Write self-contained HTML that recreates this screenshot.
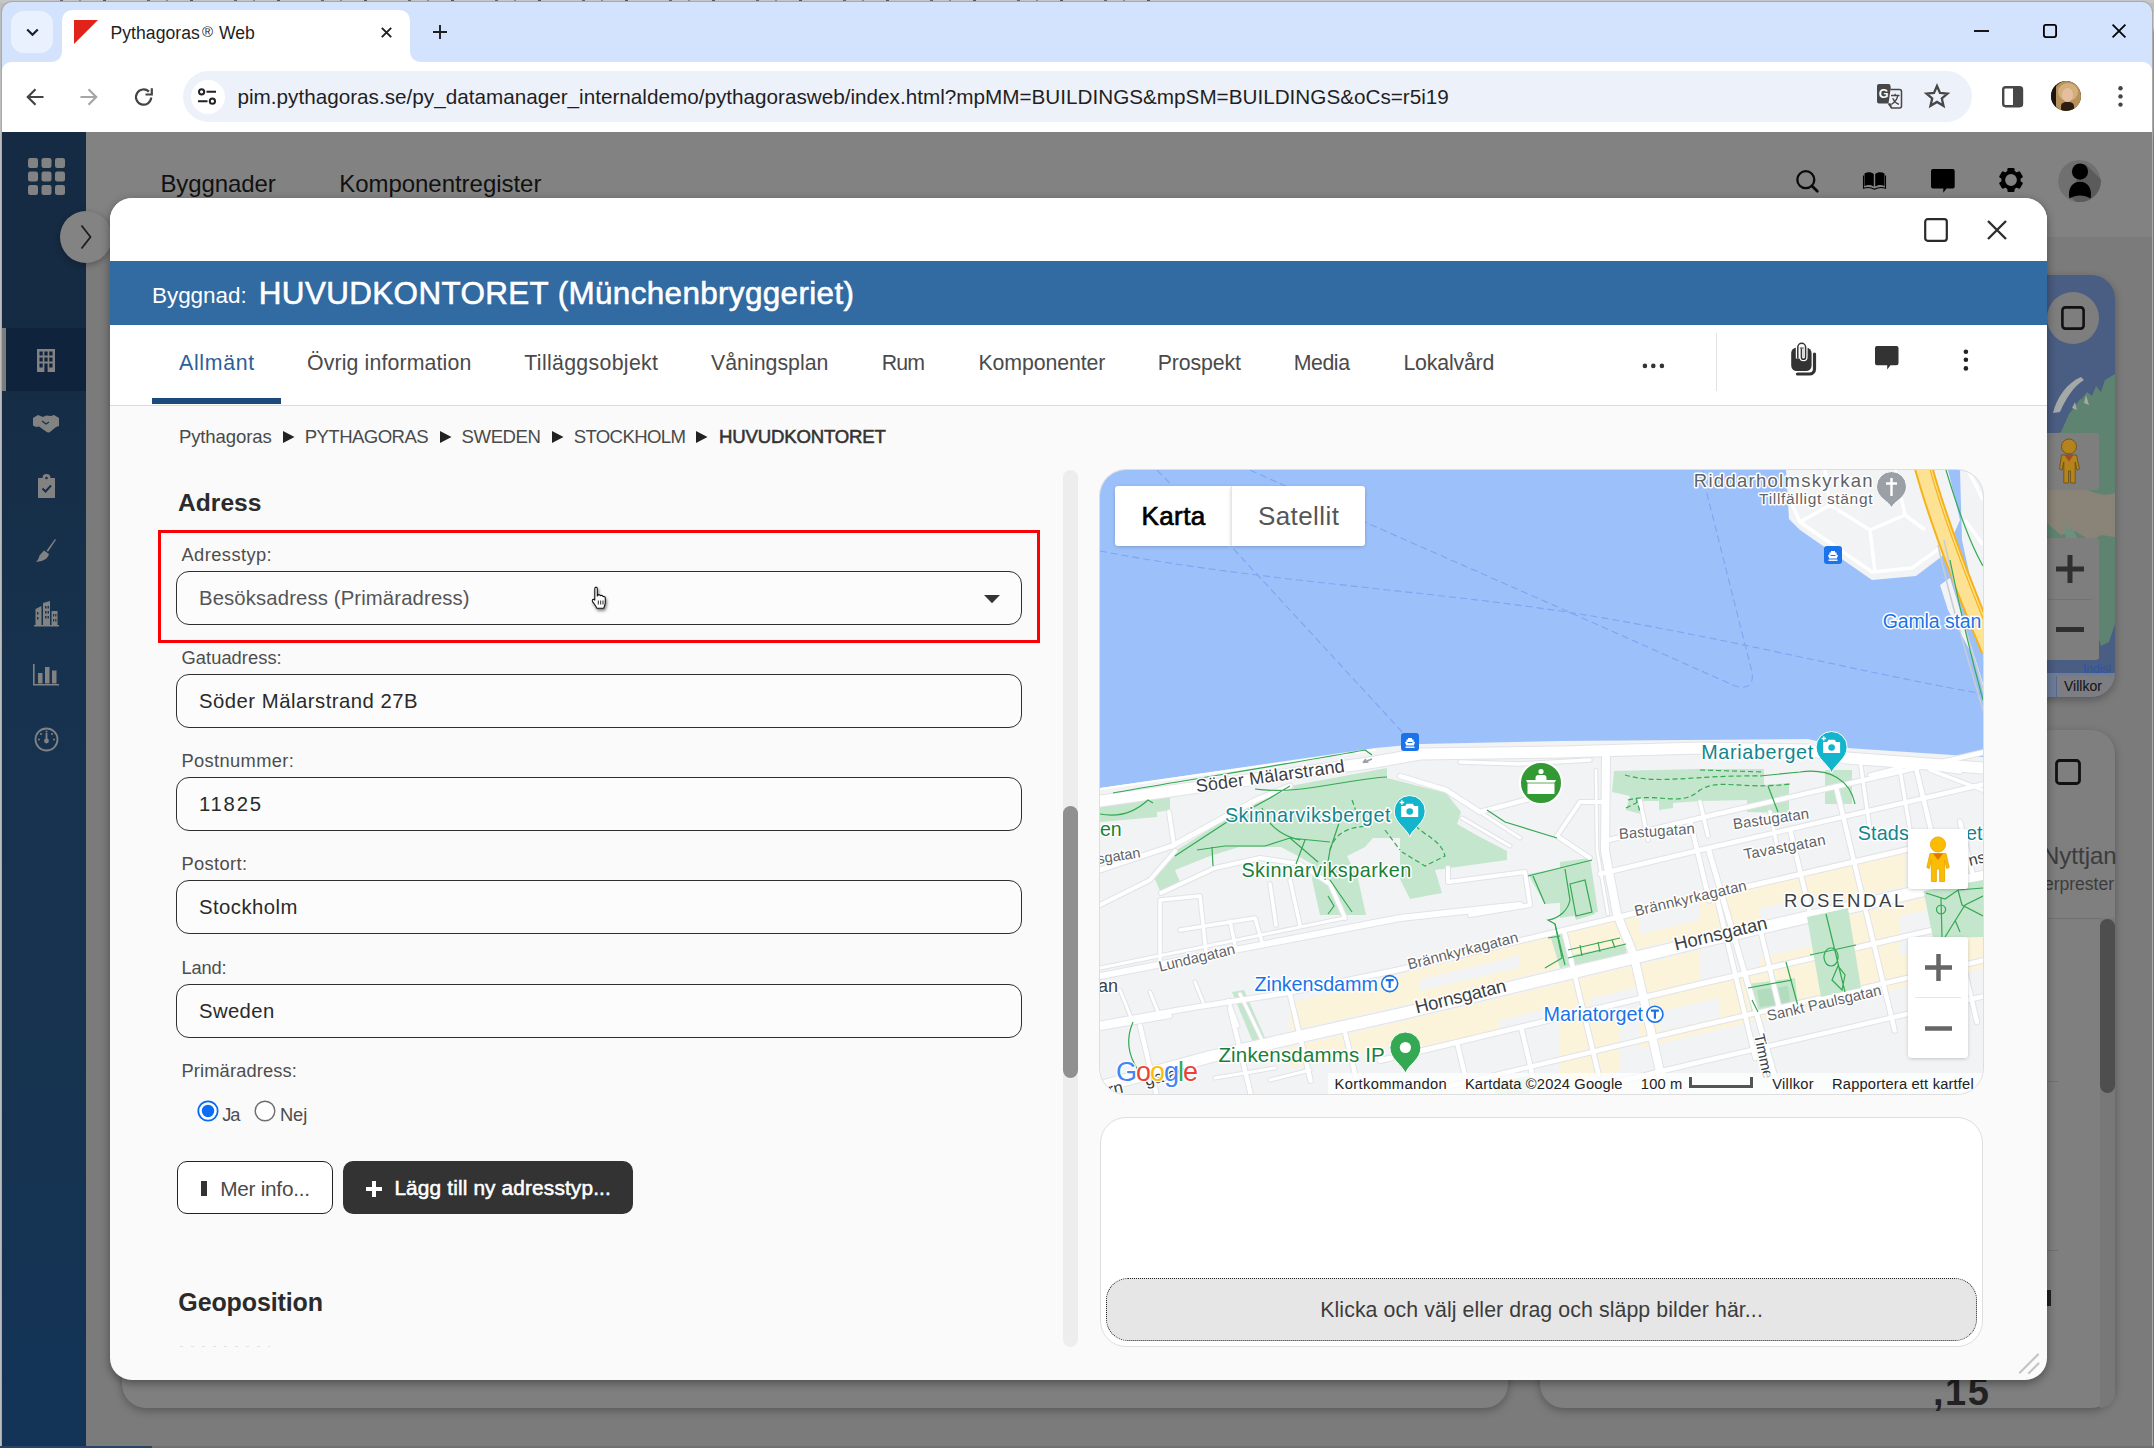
<!DOCTYPE html>
<html lang="sv">
<head>
<meta charset="utf-8">
<title>Pythagoras® Web</title>
<style>
*{box-sizing:border-box;margin:0;padding:0}
html,body{width:2154px;height:1448px;overflow:hidden;background:#bdbdbd}
body{position:relative;font-family:"Liberation Sans",sans-serif;color:#222}
svg{display:block}
svg text{font-family:"Liberation Sans",sans-serif}
#modal{position:absolute;left:110px;top:198px;width:1937px;height:1182px;background:#fafafa;border-radius:22px;overflow:hidden}
#modalsh{position:absolute;left:110px;top:198px;width:1937px;height:1182px;border-radius:22px;box-shadow:0 3px 10px rgba(0,0,0,.4)}
#map{position:absolute;left:990px;top:272px;width:883px;height:624px;border-radius:26px;overflow:hidden;background:#f1f3f4;box-shadow:0 0 0 1px #dedede}
#map>svg{position:absolute;left:0;top:0}
#mapc{position:absolute;left:0;top:0;width:883px;height:624px}
</style>
</head>
<body>
<!-- browser chrome -->
<div style="position:absolute;left:0.0px;top:0.0px;width:2154.0px;height:3.0px;background:#c6c6c6"></div>
<div style="position:absolute;left:60.0px;top:0.0px;width:1100.0px;height:2.0px;background:repeating-linear-gradient(90deg,#666 0 3px,#c6c6c6 3px 19px,#888 19px 21px,#c6c6c6 21px 43px,#555 43px 46px,#c6c6c6 46px 87px)"></div>
<div style="position:absolute;left:1.0px;top:1.0px;width:2152.0px;height:1447.0px;background:#a9a9a9;border-radius:11px 11px 0 0"></div>
<div style="position:absolute;left:2.0px;top:2.0px;width:2150.0px;height:1446.0px;background:#d3e3fd;border-radius:10px 10px 0 0"></div>
<div style="position:absolute;left:2.0px;top:62.0px;width:2150.0px;height:70.0px;background:#fff;border-radius:9px 9px 0 0"></div>
<div style="position:absolute;left:11.0px;top:11.0px;width:42.0px;height:42.0px;background:#e9f1fe;border-radius:13px"></div>
<svg style="position:absolute;left:25.5px;top:27.5px;overflow:visible;" width="13" height="9" viewBox="0 0 13 9"><path d="M1.2 1.5L6.5 6.800 11.800 1.5" fill="none" stroke="#1f1f1f" stroke-width="2.2"/></svg>
<svg style="position:absolute;left:50.0px;top:10.0px;overflow:visible;" width="372" height="52" viewBox="0 0 372 52"><path d="M0 52C8 52 12 48 12 40V12C12 4 16 0 24 0H348C356 0 360 4 360 12V40C360 48 364 52 372 52z" fill="#fff"/></svg>
<svg style="position:absolute;left:74.0px;top:20.0px;overflow:visible;" width="24" height="24" viewBox="0 0 24 24"><path d="M0 0H24L0 24z" fill="#e2231a"/></svg>
<div style="position:absolute;line-height:1;white-space:nowrap;left:110.5px;top:24.8px;font-size:17.6px;color:#1f1f1f;letter-spacing:0.037px;">Pythagoras<span style="font-size:15px;position:relative;top:-1.500px;margin:0 6px 0 2px">®</span>Web</div>
<svg style="position:absolute;left:380.5px;top:26.5px;overflow:visible;" width="11" height="11" viewBox="0 0 11 11"><path d="M.8.8L10.200 10.200M10.200.8L.8 10.200" stroke="#1f1f1f" stroke-width="1.900" fill="none"/></svg>
<svg style="position:absolute;left:433.0px;top:25.0px;overflow:visible;" width="14" height="14" viewBox="0 0 14 14"><path d="M7 0v14M0 7h14" stroke="#1f1f1f" stroke-width="1.900" fill="none"/></svg>
<svg style="position:absolute;left:1974.0px;top:29.8px;overflow:visible;" width="15" height="2" viewBox="0 0 15 2"><path d="M0 1h15" stroke="#000" stroke-width="1.800"/></svg>
<svg style="position:absolute;left:2042.5px;top:23.5px;overflow:visible;" width="14" height="14" viewBox="0 0 14 14"><rect x=".9" y=".9" width="12.200" height="12.200" rx="2" fill="none" stroke="#000" stroke-width="1.800"/></svg>
<svg style="position:absolute;left:2111.5px;top:24.0px;overflow:visible;" width="14" height="14" viewBox="0 0 14 14"><path d="M.6.6L13.400 13.400M13.400.6L.6 13.400" stroke="#000" stroke-width="1.800" fill="none"/></svg>
<svg style="position:absolute;left:26.0px;top:87.5px;overflow:visible;" width="18" height="18" viewBox="0 0 18 18"><path d="M17.500 9H2M9.500 1.200L1.800 9l7.700 7.800" fill="none" stroke="#444" stroke-width="2.200"/></svg>
<svg style="position:absolute;left:80.0px;top:87.5px;overflow:visible;" width="18" height="18" viewBox="0 0 18 18"><path d="M.5 9H16M8.500 1.200L16.200 9l-7.700 7.800" fill="none" stroke="#a6a6a6" stroke-width="2.200"/></svg>
<svg style="position:absolute;left:133.5px;top:86.5px;overflow:visible;" width="20" height="20" viewBox="0 0 20 20"><path d="M17.200 10.500a7.600 7.600 0 1 1-2.300-5.900" fill="none" stroke="#444" stroke-width="2.200"/><path d="M17.800 1.200v6.300h-6.300" fill="none" stroke="#444" stroke-width="2.200"/></svg>
<div style="position:absolute;left:183.0px;top:71.0px;width:1789.0px;height:50.5px;background:#edf1fa;border-radius:26px"></div>
<div style="position:absolute;left:190.5px;top:79.5px;width:34.0px;height:34.0px;background:#fff;border-radius:50%"></div>
<svg style="position:absolute;left:198.0px;top:88.0px;overflow:visible;" width="19" height="17" viewBox="0 0 19 17"><path d="M8.500 3.800H18M0 13.200h9.500" stroke="#222" stroke-width="2"/><circle cx="3.600" cy="3.800" r="2.600" fill="none" stroke="#222" stroke-width="2"/><circle cx="14.400" cy="13.200" r="2.600" fill="none" stroke="#222" stroke-width="2"/></svg>
<div class="url" style="position:absolute;line-height:1;white-space:nowrap;left:237.5px;top:86.7px;font-size:20.7px;color:#1f1f1f;">pim.pythagoras.se/py_datamanager_internaldemo/pythagorasweb/index.html?mpMM=BUILDINGS&amp;mpSM=BUILDINGS&amp;oCs=r5i19</div>
<svg style="position:absolute;left:1876.5px;top:84.0px;overflow:visible;" width="26" height="26" viewBox="0 0 26 26"><path d="M2 0h9.500a2 2 0 0 1 2 2l1.500 17.500H2a2 2 0 0 1-2-2V2a2 2 0 0 1 2-2z" fill="#474747"/><path d="M13.500 5.500h9a2 2 0 0 1 2 2v14.500a2 2 0 0 1-2 2h-8l-3-4.500" fill="#edf1fa" stroke="#474747" stroke-width="1.500" stroke-linejoin="round"/><path d="M11.500 19.500l3 4.500v-4.500z" fill="#474747"/><text x="6.500" y="14.300" font-family="Liberation Sans,sans-serif" font-size="12.500" font-weight="bold" fill="#fff" text-anchor="middle">G</text><path d="M14 11.500h8.500M18.200 9.800v1.700M20.900 11.500c-1 4-3.300 7-6.200 8.800M15.700 14.200c1.200 2.700 3.300 4.900 6.300 6.200" stroke="#474747" stroke-width="1.300" fill="none"/></svg>
<svg style="position:absolute;left:1925.0px;top:83.5px;overflow:visible;" width="24" height="24" viewBox="0 0 24 24"><path d="M12 2l3 6.900 7.500.7-5.700 4.900 1.700 7.300L12 17.900l-6.500 3.900 1.700-7.300L1.500 9.600 9 8.900z" fill="none" stroke="#474747" stroke-width="2.300" stroke-linejoin="miter"/></svg>
<svg style="position:absolute;left:2002.0px;top:85.7px;overflow:visible;" width="21.2" height="21.4" viewBox="0 0 21.2 21.4"><rect x="1.200" y="1.200" width="18.800" height="19" rx="2.400" fill="none" stroke="#474747" stroke-width="2.400"/><path d="M11 1h8a2 2 0 0 1 2 2v15.400a2 2 0 0 1-2 2h-8z" fill="#474747"/></svg>
<div style="position:absolute;left:2050.8px;top:80.8px;width:30.0px;height:30.0px;border-radius:50%;overflow:hidden;background:#3a2c22"><div style="position:absolute;left:2px;top:0;width:28px;height:30px;border-radius:50% 50% 40% 45%;background:#b8905a"></div><div style="position:absolute;left:7px;top:2px;width:20px;height:18px;border-radius:50%;background:#d2b07c"></div><div style="position:absolute;left:11.500px;top:7px;width:11px;height:14px;border-radius:50%;background:#e6bd9e"></div><div style="position:absolute;left:10px;top:21px;width:13px;height:10px;border-radius:40% 40% 0 0;background:#2b1d12"></div><div style="position:absolute;left:0;top:4px;width:5px;height:22px;background:#1c1512"></div></div>
<svg style="position:absolute;left:2116.5px;top:85.5px;overflow:visible;" width="7" height="21" viewBox="0 0 7 21"><circle cx="3.500" cy="2.200" r="2.200" fill="#444"/><circle cx="3.500" cy="10.400" r="2.200" fill="#444"/><circle cx="3.500" cy="18.600" r="2.200" fill="#444"/></svg>
<!-- page (dimmed) -->
<div style="position:absolute;left:2.0px;top:132.0px;width:2150.0px;height:1316.0px;background:#7b7b7b"></div>
<div style="position:absolute;left:2.0px;top:132.0px;width:2150.0px;height:105.0px;background:#828282"></div>
<div style="position:absolute;left:122.0px;top:1200.0px;width:1386.0px;height:208.0px;background:#7f7f7f;border-radius:24px;box-shadow:0 3px 8px rgba(0,0,0,.28);"></div>
<div style="position:absolute;left:1540.0px;top:730.0px;width:575.0px;height:678.0px;background:#7f7f7f;border-radius:24px;box-shadow:0 3px 8px rgba(0,0,0,.28);"></div>
<div style="position:absolute;line-height:1;white-space:nowrap;left:1933.0px;top:1372.6px;font-size:38px;color:#222;font-weight:bold;letter-spacing:1.500px;">,15</div>
<div style="position:absolute;left:1960.0px;top:275.0px;width:155.0px;height:422.0px;border-radius:24px;overflow:hidden;background:#4a5d82;box-shadow:0 3px 8px rgba(0,0,0,.28);"><svg width="155" height="422" viewBox="0 0 155 422" style="position:absolute;left:0;top:0"><path d="M121 125l6-8 5 4 4-10 5 6 4-12 10-6v250l-6 18-8 4-6-20-12-36-6-4-10-30 2-14-28-6v-96l20-8 8-18 12-16z" fill="#5e8471"/><path d="M87 212c12-4 26-2 38 2 10 4 20 8 30 4v44l-14-2-10 6-16-10-14 4-14-12z" fill="#8a8478"/><path d="M104 250l10 6 6 14 12 4 4 10-10-2-8-10-12-8z" fill="#6f8f7e"/><path d="M93 138c4-16 14-30 28-36l3 3c-10 6-18 18-24 32z" fill="#a4a8a6"/><path d="M112 133l3-6 2 8zM124 128l2-8 3 10z" fill="#a4a8a6"/><rect x="87" y="398" width="68" height="24" fill="#6d7d99"/><rect x="96" y="401" width="59" height="21" fill="#7c7e83"/><rect x="96" y="401" width="1" height="21" fill="#56688c"/><text x="104" y="416" font-size="14" fill="#111">Villkor</text><text x="123" y="398" font-size="12" fill="#2d55a5">Indisl</text></svg></div>
<div style="position:absolute;left:2047.0px;top:292.0px;width:52.0px;height:52.0px;border-radius:50%;background:#7e7e7e"></div>
<svg style="position:absolute;left:2061.0px;top:306.0px;overflow:visible;" width="24" height="24" viewBox="0 0 24 24"><rect x="1.400" y="1.400" width="21.200" height="21.200" rx="3" fill="none" stroke="#111" stroke-width="2.600"/></svg>
<div style="position:absolute;left:2040.0px;top:433.0px;width:59.0px;height:57.0px;background:#7e7e7e;border-radius:3px"></div>
<svg style="position:absolute;left:2057.0px;top:438.0px;overflow:visible;" width="24" height="46" viewBox="0 0 24 46"><circle cx="12" cy="8.500" r="7.500" fill="#b4831c" stroke="#6b4d10" stroke-width=".8"/><path d="M4.500 17h15l3 14-2.500 1-1.800-8V45h-4.700V33h-2V45H6.800V24L5 32l-2.500-1z" fill="#b4831c" stroke="#6b4d10" stroke-width=".8"/><path d="M7.500 17h9L12 23.500z" fill="#a8452a"/></svg>
<div style="position:absolute;left:2040.0px;top:538.0px;width:59.0px;height:122.0px;background:#7e7e7e;border-radius:3px"></div>
<div style="position:absolute;left:2047.0px;top:598.5px;width:45.0px;height:1.0px;background:#737373"></div>
<svg style="position:absolute;left:2056.0px;top:555.0px;overflow:visible;" width="28" height="28" viewBox="0 0 28 28"><path d="M14 0v28M0 14h28" stroke="#2f2f2f" stroke-width="5"/></svg>
<svg style="position:absolute;left:2056.0px;top:626.5px;overflow:visible;" width="28" height="5" viewBox="0 0 28 5"><path d="M0 2.500h28" stroke="#2f2f2f" stroke-width="5"/></svg>
<svg style="position:absolute;left:2055.0px;top:759.0px;overflow:visible;" width="26" height="26" viewBox="0 0 26 26"><rect x="1.500" y="1.500" width="23" height="23" rx="3" fill="none" stroke="#111" stroke-width="2.800"/></svg>
<div style="position:absolute;line-height:1;white-space:nowrap;left:2042.0px;top:843.7px;font-size:24px;color:#3c3c3c;">Nyttjan</div>
<div style="position:absolute;line-height:1;white-space:nowrap;left:2044.0px;top:876.2px;font-size:17.5px;color:#3c3c3c;">erprester</div>
<div style="position:absolute;left:2047.0px;top:918.0px;width:53.0px;height:1.0px;background:#707070"></div>
<div style="position:absolute;left:2047.0px;top:1081.0px;width:11.0px;height:1.0px;background:#707070"></div>
<div style="position:absolute;left:2047.0px;top:1250.0px;width:11.0px;height:1.0px;background:#707070"></div>
<div style="position:absolute;left:2100.0px;top:918.0px;width:15.0px;height:490.0px;background:#787878;border-radius:0 0 22px 0"></div>
<div style="position:absolute;left:2100.0px;top:919.0px;width:15.0px;height:174.0px;background:#4e4e4e;border-radius:8px"></div>
<div style="position:absolute;left:2047.0px;top:1290.0px;width:4.0px;height:16.0px;background:#222"></div>
<div style="position:absolute;line-height:1;white-space:nowrap;left:160.4px;top:171.9px;font-size:24px;color:#111;letter-spacing:-0.099px;">Byggnader</div>
<div style="position:absolute;line-height:1;white-space:nowrap;left:339.2px;top:171.9px;font-size:24px;color:#111;letter-spacing:-0.036px;">Komponentregister</div>
<svg style="position:absolute;left:1794.5px;top:168.5px;overflow:visible;" width="24" height="24" viewBox="0 0 24 24"><circle cx="10.800" cy="10.700" r="8.500" fill="none" stroke="#0a0a0a" stroke-width="2.300"/><path d="M17 17L22.300 22.300" stroke="#0a0a0a" stroke-width="2.800" stroke-linecap="round"/></svg>
<svg style="position:absolute;left:1863.0px;top:172.0px;overflow:visible;" width="23" height="18" viewBox="0 0 23 18"><path d="M1.500 1.500C4.500-.3 8.500-.1 10.800 2v12.500C8.500 12.600 4.500 12.400 1.500 14z" fill="#000"/><path d="M21.500 1.500C18.500-.3 14.500-.1 12.200 2v12.500c2.300-1.900 6.300-2.100 9.300-.5z" fill="#000"/><path d="M.5 3.500v12.800c3.500-1.200 7.500-1 11 .9 3.500-1.900 7.500-2.100 11-.9V3.500" fill="none" stroke="#000" stroke-width="1.100"/></svg>
<svg style="position:absolute;left:1931.2px;top:169.3px;overflow:visible;" width="24" height="24" viewBox="0 0 24 24"><path d="M2 0h19.700a2 2 0 0 1 2 2v15.400a2 2 0 0 1-2 2H15.500l-3.200 4.300V19.400H2a2 2 0 0 1-2-2V2a2 2 0 0 1 2-2z" fill="#000"/></svg>
<svg style="position:absolute;left:1999.3px;top:168.3px;overflow:visible;" width="24" height="24" viewBox="0 0 24 24"><g transform="translate(12 12)"><circle r="7.800" fill="none" stroke="#000" stroke-width="3.800"/><rect x="-3.600" y="-12" width="7.200" height="5" rx="1.200" fill="#000" transform="rotate(0)"/><rect x="-3.600" y="-12" width="7.200" height="5" rx="1.200" fill="#000" transform="rotate(60)"/><rect x="-3.600" y="-12" width="7.200" height="5" rx="1.200" fill="#000" transform="rotate(120)"/><rect x="-3.600" y="-12" width="7.200" height="5" rx="1.200" fill="#000" transform="rotate(180)"/><rect x="-3.600" y="-12" width="7.200" height="5" rx="1.200" fill="#000" transform="rotate(240)"/><rect x="-3.600" y="-12" width="7.200" height="5" rx="1.200" fill="#000" transform="rotate(300)"/></g></svg>
<svg style="position:absolute;left:2058.3px;top:159.8px;overflow:visible;overflow:hidden;border-radius:50%;" width="42.6" height="42.6" viewBox="0 0 42.6 42.6"><circle cx="21.300" cy="21.300" r="21.300" fill="#707070"/><path d="M27 3.400L60 36.400L44 68L11 35z" fill="#5b5b5b"/></svg>
<svg style="position:absolute;left:2066.6px;top:162.5px;overflow:visible;" width="26" height="36" viewBox="0 0 26 36"><circle cx="13" cy="8.600" r="8.100" fill="#000"/><path d="M2.400 35.500C.5 26 5 18.800 13 18.800S25.500 26 23.600 35.500C17 31.500 9 31.500 2.400 35.500z" fill="#000"/></svg>
<div style="position:absolute;left:2.0px;top:132.0px;width:84.0px;height:1316.0px;background:linear-gradient(#152b43 0,#152b43 14%,#17324e 40%,#16334f 70%,#133358 100%)"></div>
<div style="position:absolute;left:2.0px;top:328.0px;width:84.0px;height:63.0px;background:#10233d"></div>
<div style="position:absolute;left:2.0px;top:328.0px;width:4.0px;height:63.0px;background:#7d7d7d"></div>
<svg style="position:absolute;left:28.0px;top:158.0px;overflow:visible;" width="37" height="37" viewBox="0 0 37 37"><rect x="0.0" y="0.0" width="10" height="10" rx="2.200" fill="#828282"/><rect x="13.5" y="0.0" width="10" height="10" rx="2.200" fill="#828282"/><rect x="27.0" y="0.0" width="10" height="10" rx="2.200" fill="#828282"/><rect x="0.0" y="13.5" width="10" height="10" rx="2.200" fill="#828282"/><rect x="13.5" y="13.5" width="10" height="10" rx="2.200" fill="#828282"/><rect x="27.0" y="13.5" width="10" height="10" rx="2.200" fill="#828282"/><rect x="0.0" y="27.0" width="10" height="10" rx="2.200" fill="#828282"/><rect x="13.5" y="27.0" width="10" height="10" rx="2.200" fill="#828282"/><rect x="27.0" y="27.0" width="10" height="10" rx="2.200" fill="#828282"/></svg>
<div style="position:absolute;left:60.0px;top:211.0px;width:52.0px;height:52.0px;border-radius:50%;background:#838383;box-shadow:0 2px 6px rgba(0,0,0,.3)"></div>
<svg style="position:absolute;left:80.0px;top:224.0px;overflow:visible;" width="12" height="26" viewBox="0 0 12 26"><path d="M1.500 1.500L10.500 13 1.500 24.500" fill="none" stroke="#1d1d1d" stroke-width="1.800"/></svg>
<svg style="position:absolute;left:37.0px;top:349.0px;overflow:visible;" width="18" height="23" viewBox="0 0 18 23"><path d="M0 0h18v23H0z" fill="#828282"/><g fill="#10233d"><rect x="2.500" y="2.500" width="3.200" height="4"/><rect x="7.400" y="2.500" width="3.200" height="4"/><rect x="12.300" y="2.500" width="3.200" height="4"/><rect x="2.500" y="8.500" width="3.200" height="4"/><rect x="7.400" y="8.500" width="3.200" height="4"/><rect x="12.300" y="8.500" width="3.200" height="4"/><rect x="2.500" y="14.500" width="3.200" height="4"/><rect x="12.300" y="14.500" width="3.200" height="4"/><rect x="7.400" y="14.500" width="3.200" height="8.500"/></g></svg>
<svg style="position:absolute;left:33.0px;top:415.0px;overflow:visible;" width="26" height="17" viewBox="0 0 26 17"><path d="M0 3l5-3 5 2 3-1.500L18 1l3-1 5 3v8l-3 1-6 5c-1.500 1-3 .5-4-.5l-7-5-3 .5-3-1.500z" fill="#828282"/><path d="M9 6l4 3 3-2" fill="none" stroke="#17304f" stroke-width="1.300"/></svg>
<svg style="position:absolute;left:37.5px;top:475.0px;overflow:visible;" width="17" height="23" viewBox="0 0 17 23"><path d="M0 3h4.500a4 4 0 0 1 8 0H17v20H0z" fill="#828282"/><path d="M4.500 13.500l3 3 5.500-6" fill="none" stroke="#17304f" stroke-width="2"/><circle cx="8.500" cy="3" r="1.300" fill="#17304f"/></svg>
<svg style="position:absolute;left:36.0px;top:539.0px;overflow:visible;" width="20" height="23" viewBox="0 0 20 23"><path d="M19 0l1 .8-8 12-1.500-1z" fill="#828282"/><path d="M8 11.500l5 3.500c-1 4-4 7-13 8 2-2 3-4 3.500-6.500z" fill="#828282"/></svg>
<svg style="position:absolute;left:34.0px;top:601.0px;overflow:visible;" width="25" height="25" viewBox="0 0 25 25"><path d="M0 24h25v1.500H0zM1.500 8l6-3v19h-6zM9 2l7-2v24H9zM17.500 10h6v14h-6z" fill="#828282"/><g fill="#1a3557"><rect x="3" y="11" width="1.500" height="2.500"/><rect x="3" y="16" width="1.500" height="2.500"/><rect x="11" y="5" width="1.500" height="2.500"/><rect x="13.500" y="5" width="1.500" height="2.500"/><rect x="11" y="10" width="1.500" height="2.500"/><rect x="13.500" y="10" width="1.500" height="2.500"/><rect x="11" y="15" width="1.500" height="2.500"/><rect x="13.500" y="15" width="1.500" height="2.500"/><rect x="19" y="13" width="1.200" height="2.500"/><rect x="21.200" y="13" width="1.200" height="2.500"/><rect x="19" y="18" width="1.200" height="2.500"/><rect x="21.200" y="18" width="1.200" height="2.500"/></g></svg>
<svg style="position:absolute;left:33.0px;top:664.0px;overflow:visible;" width="26" height="22" viewBox="0 0 26 22"><path d="M0 0h1.600v20H26v1.600H0z" fill="#828282"/><rect x="5" y="9" width="4.500" height="10.500" fill="#828282"/><rect x="12" y="3" width="4.500" height="16.500" fill="#828282"/><rect x="19" y="6.500" width="4.500" height="13" fill="#828282"/></svg>
<svg style="position:absolute;left:34.0px;top:727.0px;overflow:visible;" width="25" height="25" viewBox="0 0 25 25"><circle cx="12.500" cy="12.500" r="11" fill="none" stroke="#828282" stroke-width="1.800"/><circle cx="12.500" cy="14" r="2.400" fill="#828282"/><path d="M12.500 14V6" stroke="#828282" stroke-width="1.800"/><g fill="#828282"><circle cx="12.500" cy="4.500" r="1"/><circle cx="5" cy="12.500" r="1"/><circle cx="20" cy="12.500" r="1"/><circle cx="7" cy="7" r="1"/><circle cx="18" cy="7" r="1"/></g></svg>
<div style="position:absolute;left:0.0px;top:1446.0px;width:2154.0px;height:2.0px;background:#707070"></div>
<div style="position:absolute;left:0.0px;top:1446.0px;width:152.0px;height:2.0px;background:#2a4563"></div>
<div style="position:absolute;left:2152.5px;top:12.0px;width:1.5px;height:1436.0px;background:linear-gradient(#c6c6c6 0,#c6c6c6 1%,#8a93a8 1.500%,#8a8f9c 8%,#777 9%,#6e6e6e 100%)"></div>
<!-- modal -->
<div id="modalsh"></div>
<div id="modal">
<div style="position:absolute;left:0.0px;top:0.0px;width:1937.0px;height:63.0px;background:#fff"></div>
<div style="position:absolute;left:0.0px;top:63.0px;width:1937.0px;height:64.0px;background:#326aa2"></div>
<div style="position:absolute;line-height:1;white-space:nowrap;left:42.0px;top:86.5px;font-size:22.5px;color:#fff;letter-spacing:-0.054px;">Byggnad:</div>
<div style="position:absolute;line-height:1;white-space:nowrap;left:148.8px;top:79.6px;font-size:31.4px;color:#fff;letter-spacing:0.374px;-webkit-text-stroke:.6px #fff;">HUVUDKONTORET (Münchenbryggeriet)</div>
<div style="position:absolute;left:0.0px;top:127.0px;width:1937.0px;height:81.0px;background:#fff;border-bottom:1.5px solid #dadada"></div>
<div style="position:absolute;line-height:1;white-space:nowrap;left:69.0px;top:154.5px;font-size:21.3px;color:#2b6098;letter-spacing:0.697px;">Allmänt</div>
<div style="position:absolute;line-height:1;white-space:nowrap;left:197.0px;top:154.5px;font-size:21.3px;color:#4a4a4a;letter-spacing:0.134px;">Övrig information</div>
<div style="position:absolute;line-height:1;white-space:nowrap;left:414.3px;top:154.5px;font-size:21.3px;color:#4a4a4a;letter-spacing:0.328px;">Tilläggsobjekt</div>
<div style="position:absolute;line-height:1;white-space:nowrap;left:601.0px;top:154.5px;font-size:21.3px;color:#4a4a4a;letter-spacing:0.017px;">Våningsplan</div>
<div style="position:absolute;line-height:1;white-space:nowrap;left:771.8px;top:154.5px;font-size:21.3px;color:#4a4a4a;letter-spacing:-0.884px;">Rum</div>
<div style="position:absolute;line-height:1;white-space:nowrap;left:868.4px;top:154.5px;font-size:21.3px;color:#4a4a4a;letter-spacing:-0.087px;">Komponenter</div>
<div style="position:absolute;line-height:1;white-space:nowrap;left:1047.7px;top:154.5px;font-size:21.3px;color:#4a4a4a;letter-spacing:-0.121px;">Prospekt</div>
<div style="position:absolute;line-height:1;white-space:nowrap;left:1183.8px;top:154.5px;font-size:21.3px;color:#4a4a4a;letter-spacing:-0.454px;">Media</div>
<div style="position:absolute;line-height:1;white-space:nowrap;left:1293.4px;top:154.5px;font-size:21.3px;color:#4a4a4a;letter-spacing:-0.168px;">Lokalvård</div>
<div style="position:absolute;left:42.0px;top:200.0px;width:129.0px;height:6.0px;background:#1d4a7c"></div>
<div style="position:absolute;left:1606.0px;top:135.0px;width:1.0px;height:57.5px;background:#e2e2e2"></div>
<svg style="position:absolute;left:1814.0px;top:20.0px;overflow:visible;" width="24" height="24" viewBox="0 0 24 24"><rect x="1.2" y="1.2" width="21.6" height="21.6" rx="2.5" fill="none" stroke="#2a2a2a" stroke-width="2.2"/></svg>
<svg style="position:absolute;left:1877.0px;top:22.0px;overflow:visible;" width="20" height="20" viewBox="0 0 20 20"><path d="M1 1L19 19M19 1L1 19" stroke="#2e2e2e" stroke-width="2.4" fill="none"/></svg>
<svg style="position:absolute;left:1530.0px;top:163.0px;overflow:visible;" width="28" height="10" viewBox="0 0 28 10"><circle cx="4.900" cy="4.900" r="2.300" fill="#333"/><circle cx="13.300" cy="4.900" r="2.300" fill="#333"/><circle cx="21.900" cy="4.900" r="2.300" fill="#333"/></svg>
<svg style="position:absolute;left:1678.0px;top:142.0px;overflow:visible;" width="30" height="38" viewBox="0 0 30 38"><path d="M9.500 34h12a5 5 0 0 0 5-5V14" fill="none" stroke="#333" stroke-width="3.200" stroke-linecap="round"/><rect x="3.200" y="7.600" width="20.400" height="23.400" rx="5.500" fill="#333"/><path d="M9.800 18.500V7.200a3.900 3.900 0 0 1 7.800 0V17.200a2.100 2.100 0 0 1-4.200 0V8.500" fill="none" stroke="#fff" stroke-width="4"/><path d="M9.800 18.500V7.200a3.900 3.900 0 0 1 7.800 0V17.200a2.100 2.100 0 0 1-4.200 0V8.500" fill="none" stroke="#333" stroke-width="1.500"/></svg>
<svg style="position:absolute;left:1765.4px;top:148.0px;overflow:visible;" width="24" height="24" viewBox="0 0 24 24"><path d="M2 0h19.500a2 2 0 0 1 2 2v15.300a2 2 0 0 1-2 2H15.500l-3.300 4.300V19.300H2a2 2 0 0 1-2-2V2a2 2 0 0 1 2-2z" fill="#333"/></svg>
<svg style="position:absolute;left:1852.0px;top:150.0px;overflow:visible;" width="8" height="24" viewBox="0 0 8 24"><circle cx="3.900" cy="3.700" r="2.300" fill="#222"/><circle cx="3.900" cy="11.800" r="2.300" fill="#222"/><circle cx="3.900" cy="20.400" r="2.300" fill="#222"/></svg>
<div style="position:absolute;line-height:1;white-space:nowrap;left:68.9px;top:229.8px;font-size:18.6px;color:#4a4a4a;letter-spacing:-0.129px;">Pythagoras</div>
<div style="position:absolute;line-height:1;white-space:nowrap;left:194.7px;top:229.8px;font-size:18.6px;color:#4a4a4a;letter-spacing:-0.573px;">PYTHAGORAS</div>
<div style="position:absolute;line-height:1;white-space:nowrap;left:351.6px;top:229.8px;font-size:18.6px;color:#4a4a4a;letter-spacing:-0.445px;">SWEDEN</div>
<div style="position:absolute;line-height:1;white-space:nowrap;left:463.7px;top:229.8px;font-size:18.6px;color:#4a4a4a;letter-spacing:-0.655px;">STOCKHOLM</div>
<div style="position:absolute;line-height:1;white-space:nowrap;left:609.0px;top:229.8px;font-size:18.6px;color:#333;letter-spacing:-0.182px;-webkit-text-stroke:.55px #333;">HUVUDKONTORET</div>
<svg style="position:absolute;left:172.5px;top:233.2px;overflow:visible;" width="11.5" height="12" viewBox="0 0 11.5 12"><path d="M0 0L11.500 6L0 12z" fill="#222"/></svg>
<svg style="position:absolute;left:329.8px;top:233.2px;overflow:visible;" width="11.5" height="12" viewBox="0 0 11.5 12"><path d="M0 0L11.500 6L0 12z" fill="#222"/></svg>
<svg style="position:absolute;left:441.6px;top:233.2px;overflow:visible;" width="11.5" height="12" viewBox="0 0 11.5 12"><path d="M0 0L11.500 6L0 12z" fill="#222"/></svg>
<svg style="position:absolute;left:586.3px;top:233.2px;overflow:visible;" width="11.5" height="12" viewBox="0 0 11.5 12"><path d="M0 0L11.500 6L0 12z" fill="#222"/></svg>
<div style="position:absolute;line-height:1;white-space:nowrap;left:68.0px;top:292.7px;font-size:24.6px;color:#2b2b2b;font-weight:bold;letter-spacing:0.022px;">Adress</div>
<div style="position:absolute;left:48.0px;top:332.0px;width:882.0px;height:113.0px;border:3.2px solid #fa0007"></div>
<div style="position:absolute;line-height:1;white-space:nowrap;left:71.5px;top:347.8px;font-size:18.3px;color:#4d4d4d;letter-spacing:0.425px;">Adresstyp:</div>
<div style="position:absolute;line-height:1;white-space:nowrap;left:71.5px;top:450.5px;font-size:18.3px;color:#4d4d4d;letter-spacing:0.061px;">Gatuadress:</div>
<div style="position:absolute;line-height:1;white-space:nowrap;left:71.5px;top:553.8px;font-size:18.3px;color:#4d4d4d;letter-spacing:0.368px;">Postnummer:</div>
<div style="position:absolute;line-height:1;white-space:nowrap;left:71.5px;top:657.3px;font-size:18.3px;color:#4d4d4d;letter-spacing:0.357px;">Postort:</div>
<div style="position:absolute;line-height:1;white-space:nowrap;left:71.5px;top:760.6px;font-size:18.3px;color:#4d4d4d;letter-spacing:-0.137px;">Land:</div>
<div style="position:absolute;line-height:1;white-space:nowrap;left:71.5px;top:863.5px;font-size:18.3px;color:#4d4d4d;letter-spacing:0.135px;">Primäradress:</div>
<div style="position:absolute;left:66.0px;top:373.3px;width:846.0px;height:54.0px;border:1.3px solid #2e2e2e;border-radius:13px;background:#fcfcfc"></div>
<div style="position:absolute;line-height:1;white-space:nowrap;left:89.0px;top:390.3px;font-size:20.3px;color:#555;letter-spacing:0.134px;">Besöksadress (Primäradress)</div>
<div style="position:absolute;left:66.0px;top:476.4px;width:846.0px;height:54.0px;border:1.3px solid #2e2e2e;border-radius:13px;background:#fcfcfc"></div>
<div style="position:absolute;line-height:1;white-space:nowrap;left:89.0px;top:493.4px;font-size:20.3px;color:#2a2a2a;letter-spacing:0.502px;">Söder Mälarstrand 27B</div>
<div style="position:absolute;left:66.0px;top:579.0px;width:846.0px;height:54.0px;border:1.3px solid #2e2e2e;border-radius:13px;background:#fcfcfc"></div>
<div style="position:absolute;line-height:1;white-space:nowrap;left:89.0px;top:596.0px;font-size:20.3px;color:#2a2a2a;letter-spacing:1.773px;">11825</div>
<div style="position:absolute;left:66.0px;top:682.4px;width:846.0px;height:54.0px;border:1.3px solid #2e2e2e;border-radius:13px;background:#fcfcfc"></div>
<div style="position:absolute;line-height:1;white-space:nowrap;left:89.0px;top:699.4px;font-size:20.3px;color:#2a2a2a;letter-spacing:0.452px;">Stockholm</div>
<div style="position:absolute;left:66.0px;top:786.0px;width:846.0px;height:54.0px;border:1.3px solid #2e2e2e;border-radius:13px;background:#fcfcfc"></div>
<div style="position:absolute;line-height:1;white-space:nowrap;left:89.0px;top:803.0px;font-size:20.3px;color:#2a2a2a;letter-spacing:0.381px;">Sweden</div>
<svg style="position:absolute;left:874.0px;top:397.0px;overflow:visible;" width="17" height="9" viewBox="0 0 17 9"><path d="M0 0h16L8 8.200z" fill="#333"/></svg>
<svg style="position:absolute;left:478.0px;top:387.0px;overflow:visible;" width="24" height="28" viewBox="0 0 24 28"><g filter="drop-shadow(1px 2px 1.5px rgba(0,0,0,.5))"><path d="M7.5 2.2c1-.2 1.8.5 1.8 1.5v7.2l.6-.1v-1c1-.5 2.1-.1 2.3.9l.5-.1c.9-.5 2-.1 2.2.9l.4.1c1-.4 2 .2 2 1.3v4.6c0 2.600-1.200 3.400-1.500 5.700H8.800c-.7-2.100-2.300-3.900-4-6.300-1.100-1.500-.2-3.200 1.400-2.300l.6.5V3.700c0-.8.200-1.300.7-1.500z" fill="#fff" stroke="#111" stroke-width="1.1" stroke-linejoin="round"/><path d="M10.300 15.500v4M12.700 15.500v4M15 15.500v4" stroke="#111" stroke-width=".9"/></g></svg>
<svg style="position:absolute;left:87.0px;top:902.0px;overflow:visible;" width="22" height="22" viewBox="0 0 22 22"><circle cx="11" cy="11" r="9.700" fill="#fff" stroke="#0b6cf5" stroke-width="1.8"/><circle cx="11" cy="11" r="6.200" fill="#0b6cf5"/></svg>
<div style="position:absolute;line-height:1;white-space:nowrap;left:112.2px;top:907.5px;font-size:18.3px;color:#4d4d4d;letter-spacing:-1.000px;">Ja</div>
<svg style="position:absolute;left:143.5px;top:902.0px;overflow:visible;" width="22" height="22" viewBox="0 0 22 22"><circle cx="11" cy="11" r="9.800" fill="#fff" stroke="#6e6e6e" stroke-width="1.400"/></svg>
<div style="position:absolute;line-height:1;white-space:nowrap;left:169.9px;top:907.5px;font-size:18.3px;color:#4d4d4d;letter-spacing:0.031px;">Nej</div>
<div style="position:absolute;left:67.0px;top:963.3px;width:156.0px;height:52.7px;border:1.3px solid #222;border-radius:10px;background:#fff"></div>
<div style="position:absolute;left:91.0px;top:983.3px;width:6.2px;height:14.9px;background:#333"></div>
<div style="position:absolute;line-height:1;white-space:nowrap;left:110.2px;top:980.9px;font-size:20.8px;color:#4a4a4a;letter-spacing:-0.267px;">Mer info...</div>
<div style="position:absolute;left:233.0px;top:963.0px;width:290.0px;height:53.0px;border-radius:10px;background:#333"></div>
<svg style="position:absolute;left:256.0px;top:982.5px;overflow:visible;" width="16" height="16" viewBox="0 0 16 16"><path d="M8 0v16M0 8h16" stroke="#fff" stroke-width="4"/></svg>
<div style="position:absolute;line-height:1;white-space:nowrap;left:284.4px;top:980.4px;font-size:20.8px;color:#fff;letter-spacing:0.154px;-webkit-text-stroke:.55px #fff;">Lägg till ny adresstyp...</div>
<div style="position:absolute;line-height:1;white-space:nowrap;left:68.3px;top:1092.3px;font-size:25px;color:#2b2b2b;font-weight:bold;letter-spacing:-0.113px;">Geoposition</div>
<div style="position:absolute;left:70.0px;top:1148.0px;width:90.0px;height:1.0px;background:repeating-linear-gradient(90deg,#e2e2e2 0 3px,transparent 3px 11px)"></div>
<div style="position:absolute;left:953.0px;top:272.0px;width:15.0px;height:877.0px;background:#ededed;border-radius:8px"></div>
<div style="position:absolute;left:953.0px;top:608.0px;width:15.0px;height:272.0px;background:#909090;border-radius:7.500px"></div>
<div style="position:absolute;left:990.0px;top:919.0px;width:883.0px;height:230.0px;background:#fff;border:1.3px solid #dedede;border-radius:26px"></div>
<div style="position:absolute;left:996.0px;top:1079.5px;width:871.0px;height:63.0px;background:#e6e6e6;border:1.2px dotted #222;border-radius:22px"></div>
<div style="position:absolute;line-height:1;white-space:nowrap;left:1210.2px;top:1102.0px;font-size:21.3px;color:#3c3c3c;letter-spacing:0.094px;">Klicka och välj eller drag och släpp bilder här...</div>
<svg style="position:absolute;left:1908.0px;top:1155.0px;overflow:visible;" width="20" height="20" viewBox="0 0 20 20"><path d="M2 19.500L20 1.500M11 20L20.500 10.500" stroke="#c4c4c4" stroke-width="2.200" stroke-linecap="round" fill="none"/></svg>
<div id="map">
<svg width="883" height="624" viewBox="1100 470 883 624">
<rect x="1100" y="470" width="883" height="624" fill="#f1f3f4"/><path d="M1100 470H1983V757L1847 748L1808 739L1560 741L1420 744L1375 748L1100 788z" fill="#9cc0f9"/><path d="M1786 470L1789 519L1800 530L1872 580L1916 576L1945 554L1960 520L1948 470z" fill="#f1f3f4"/><path d="M1960 470H1983V620L1975 600L1962 540z" fill="#f1f3f4"/><path d="M1940 585L1950 578L1985 690V700L1975 660L1948 610z" fill="#f1f3f4"/><path d="M1790 500L1800 522L1872 572L1912 568L1940 548" fill="none" stroke="#fff" stroke-width="3.500" stroke-linejoin="round"/><path d="M1800 522L1830 505L1870 530L1905 515L1925 530" fill="none" stroke="#fff" stroke-width="3.500" stroke-linejoin="round"/><path d="M1870 530L1875 572" fill="none" stroke="#fff" stroke-width="3.500" stroke-linejoin="round"/><path d="M1830 505L1825 470" fill="none" stroke="#fff" stroke-width="3.500" stroke-linejoin="round"/><path d="M1905 515L1895 470" fill="none" stroke="#fff" stroke-width="3.500" stroke-linejoin="round"/><path d="M1968 470L1983 500" fill="none" stroke="#fff" stroke-width="3.500" stroke-linejoin="round"/><path d="M1965 520L1983 545" fill="none" stroke="#fff" stroke-width="3.500" stroke-linejoin="round"/><path d="M1922 462Q1940 530 1990 650" fill="none" stroke="#f6b21b" stroke-width="19"/><path d="M1922 462Q1940 530 1990 650" fill="none" stroke="#fde293" stroke-width="15"/><path d="M1928 462Q1946 530 1996 650" fill="none" stroke="#f6b21b" stroke-width="1.200"/><path d="M1944 540C1955 590 1970 650 1990 710M1938 545C1950 600 1968 660 1986 720" fill="none" stroke="#c9ccd1" stroke-width="1.500"/><path d="M1946 470C1955 500 1968 540 1983 566M1950 560C1960 610 1972 660 1983 700" fill="none" stroke="#34a853" stroke-width="1.200"/><path d="M1100 551C1250 580 1420 590 1560 611C1700 632 1850 670 1983 694" stroke="#7ba6f1" stroke-width="1.100" fill="none" stroke-dasharray="7 4"/><path d="M1157 470L1230 545L1405 735" stroke="#7ba6f1" stroke-width="1.100" fill="none" stroke-dasharray="7 4"/><path d="M1250 470L1367 523L1560 608L1735 686C1748 690 1754 684 1752 672L1706 490L1703 470" stroke="#7ba6f1" stroke-width="1.100" fill="none" stroke-dasharray="7 4"/><path d="M1400 974.0L1560 935.6L1560 967.6L1400 1006.0z" fill="#fcf3db"/><path d="M1470 949.2L1560 927.6L1560 935.6L1470 957.2z" fill="#fcf3db"/><path d="M1560 929.6L1700 896.0L1905 848.6L1905 886.6L1700 934.0L1560 967.6z" fill="#fcf3db"/><path d="M1290 1046.7L1400 1022.0L1400 1044.0L1290 1068.7z" fill="#fcf3db"/><path d="M1290 1002.7L1400 978.0L1400 1006.0L1290 1030.7z" fill="#fcf3db"/><path d="M1400 1022.0L1500 998.0L1500 1030.0L1400 1054.0z" fill="#fcf3db"/><path d="M1500 998.0L1640 964.4L1640 986.4L1500 1020.0z" fill="#fcf3db"/><path d="M1560 983.6L1700 950.0L1983 884.5L1983 928.5L1700 994.0L1560 1027.6z" fill="#fcf3db"/><path d="M1640 1008.4L1700 994.0L1983 928.5L1983 968.5L1700 1034.0L1640 1048.4z" fill="#fcf3db"/><path d="M1560 1027.6L1620 1013.2L1620 1071.2L1560 1085.6z" fill="#fcf3db"/><path d="M1860 913.0L1983 884.5L1983 946.5L1860 975.0z" fill="#fcf3db"/><path d="M1420 979.2L1520 955.2L1520 967.2L1420 991.2z" fill="#f1f3f4"/><path d="M1640 916.4L1700 902.0L1700 920.0L1640 934.4z" fill="#f1f3f4"/><path d="M1700 948.0L1760 934.1L1760 968.1L1700 982.0z" fill="#f1f3f4"/><path d="M1760 908.1L1830 891.9L1830 941.9L1760 958.1z" fill="#f1f3f4"/><path d="M1900 915.7L1940 906.5L1940 946.5L1900 955.7z" fill="#f1f3f4"/><path d="M1660 1011.6L1700 1002.0L1720 997.4L1720 1017.4L1700 1022.0L1660 1031.6z" fill="#f1f3f4"/><path d="M1590 998.4L1640 986.4L1640 1006.4L1590 1018.4z" fill="#f1f3f4"/><path d="M1930 868.8L1983 856.5L1983 886.5L1930 898.8z" fill="#f1f3f4"/><path d="M1100 806L1170 797V810L1157 812V817L1100 822z" fill="#c4e6cd"/><path d="M1255 801L1285 787L1387 768V778L1446 793L1461 812L1457 824L1478 836L1507 851V860L1435 870L1442 893L1410 899L1400 879L1400 838L1373 838L1365 847L1347 856L1358 879L1366 915H1320L1312 879L1314 865L1298 856L1281 847H1239L1210 856L1175 870L1180 882L1161 893L1153 875L1175 851z" fill="#c4e6cd"/><path d="M1614 771L1700 769H1764V785L1789 783V813L1747 812V800L1700 801L1673 803V808L1659 810V801L1637 801L1641 814L1626 810L1630 796L1612 792z" fill="#c4e6cd"/><path d="M1825 770H1852V804H1825z" fill="#c4e6cd"/><path d="M1528 874L1585 864L1595 914L1576 920L1571 902L1545 904z" fill="#c4e6cd"/><path d="M1560 862L1590 858L1598 912L1560 918z" fill="#c4e6cd"/><path d="M1550 935L1561 933L1568 956L1626 944V954L1560 968z" fill="#c4e6cd"/><path d="M1747 984L1795 978L1798 1008L1752 1016z" fill="#c4e6cd"/><path d="M1232 992L1244 990L1266 1040L1252 1040z" fill="#c4e6cd"/><path d="M1495 1082L1530 1076V1094H1495z" fill="#c4e6cd"/><path d="M1757 990L1788 986L1790 1003L1760 1007z" fill="#b2dcbd"/><path d="M1100 801L1375 762L1420 754L1560 752L1700 748L1808 750L1847 758L1983 768" fill="none" stroke="#e1e3e7" stroke-width="13" stroke-linecap="round" stroke-linejoin="round"/><path d="M1100 1087L1156 1071.5L1211 1056.5L1400 1014L1700 942L1983 876.5" fill="none" stroke="#e1e3e7" stroke-width="13.5" stroke-linecap="round" stroke-linejoin="round"/><path d="M1400 969.5L1700 897.5L1983 832.0" fill="none" stroke="#e1e3e7" stroke-width="7" stroke-linecap="round" stroke-linejoin="round"/><path d="M1100 1024L1190 1008L1286 993L1400 969.500" fill="none" stroke="#e1e3e7" stroke-width="7" stroke-linecap="round" stroke-linejoin="round"/><path d="M1380 1060.5L1400 1056.0L1700 984.0L1983 918.5" fill="none" stroke="#e1e3e7" stroke-width="7" stroke-linecap="round" stroke-linejoin="round"/><path d="M1440 1088.4L1700 1026.0L1983 960.5" fill="none" stroke="#e1e3e7" stroke-width="6.5" stroke-linecap="round" stroke-linejoin="round"/><path d="M1620 1081.2L1700 1062.0L1983 996.5" fill="none" stroke="#e1e3e7" stroke-width="6.5" stroke-linecap="round" stroke-linejoin="round"/><path d="M1600 874.0L1700 850.0L1983 784.5" fill="none" stroke="#e1e3e7" stroke-width="6.5" stroke-linecap="round" stroke-linejoin="round"/><path d="M1610 839.6L1700 818.0L1983 752.5" fill="none" stroke="#e1e3e7" stroke-width="6.5" stroke-linecap="round" stroke-linejoin="round"/><path d="M1100 976L1400 918L1520 905" fill="none" stroke="#e1e3e7" stroke-width="8" stroke-linecap="round" stroke-linejoin="round"/><path d="M1100 968L1344 918" fill="none" stroke="#e1e3e7" stroke-width="5" stroke-linecap="round" stroke-linejoin="round"/><path d="M1100 1028L1170 1016" fill="none" stroke="#e1e3e7" stroke-width="6" stroke-linecap="round" stroke-linejoin="round"/><path d="M1457.0 1042.3L1470.9 1100.3" fill="none" stroke="#e1e3e7" stroke-width="6.5" stroke-linecap="round" stroke-linejoin="round"/><path d="M1521.0 1027.0L1534.9 1085.0" fill="none" stroke="#e1e3e7" stroke-width="6.5" stroke-linecap="round" stroke-linejoin="round"/><path d="M1564.0 930.6L1598.6 1074.6" fill="none" stroke="#e1e3e7" stroke-width="6.5" stroke-linecap="round" stroke-linejoin="round"/><path d="M1290.0 994.7L1310.6 1080.7" fill="none" stroke="#e1e3e7" stroke-width="6.5" stroke-linecap="round" stroke-linejoin="round"/><path d="M1345.0 1032.4L1358.0 1086.4" fill="none" stroke="#e1e3e7" stroke-width="6.5" stroke-linecap="round" stroke-linejoin="round"/><path d="M1230.0 1008.2L1252.6 1102.2" fill="none" stroke="#e1e3e7" stroke-width="6.5" stroke-linecap="round" stroke-linejoin="round"/><path d="M1140.0 1025.9L1161.6 1115.9" fill="none" stroke="#e1e3e7" stroke-width="6.5" stroke-linecap="round" stroke-linejoin="round"/><path d="M1690.0 820.4L1709.2 900.4" fill="none" stroke="#e1e3e7" stroke-width="6.5" stroke-linecap="round" stroke-linejoin="round"/><path d="M1716.0 894.3L1755.4 1058.3" fill="none" stroke="#e1e3e7" stroke-width="6.5" stroke-linecap="round" stroke-linejoin="round"/><path d="M1790.0 829.2L1812.1 921.2" fill="none" stroke="#e1e3e7" stroke-width="6.5" stroke-linecap="round" stroke-linejoin="round"/><path d="M1836.0 786.5L1894.6 1030.5" fill="none" stroke="#e1e3e7" stroke-width="6.5" stroke-linecap="round" stroke-linejoin="round"/><path d="M1916.0 768.0L1977.0 1022.0" fill="none" stroke="#e1e3e7" stroke-width="6.5" stroke-linecap="round" stroke-linejoin="round"/><path d="M1960.0 821.8L2005.6 1011.8" fill="none" stroke="#e1e3e7" stroke-width="6.5" stroke-linecap="round" stroke-linejoin="round"/><path d="M1760.0 928.1L1780.2 1012.1" fill="none" stroke="#e1e3e7" stroke-width="6.5" stroke-linecap="round" stroke-linejoin="round"/><path d="M1709 851L1780 1094" fill="none" stroke="#e1e3e7" stroke-width="7" stroke-linecap="round" stroke-linejoin="round"/><path d="M1606 758L1605 851L1617 914L1634 956L1665 1094" fill="none" stroke="#e1e3e7" stroke-width="10" stroke-linecap="round" stroke-linejoin="round"/><path d="M1596 770L1597 850L1608 914" fill="none" stroke="#e1e3e7" stroke-width="4.5" stroke-linecap="round" stroke-linejoin="round"/><path d="M1172 846L1256 800L1290 786" fill="none" stroke="#e1e3e7" stroke-width="7" stroke-linecap="round" stroke-linejoin="round"/><path d="M1100 870L1172 846" fill="none" stroke="#e1e3e7" stroke-width="7" stroke-linecap="round" stroke-linejoin="round"/><path d="M1100 905L1150 880L1175 851" fill="none" stroke="#e1e3e7" stroke-width="6" stroke-linecap="round" stroke-linejoin="round"/><path d="M1169 812L1174 845" fill="none" stroke="#e1e3e7" stroke-width="6" stroke-linecap="round" stroke-linejoin="round"/><path d="M1161 893L1215 868L1260 858L1300 864L1330 884L1345 918" fill="none" stroke="#e1e3e7" stroke-width="6" stroke-linecap="round" stroke-linejoin="round"/><path d="M1160 900V960M1160 900L1200 896L1206 952M1180 930L1255 918L1262 942M1230 921L1236 950M1290 880L1300 925M1270 884L1276 925" fill="none" stroke="#e1e3e7" stroke-width="5.5" stroke-linecap="round" stroke-linejoin="round"/><path d="M1400 776L1446 790L1480 812L1540 796" fill="none" stroke="#e1e3e7" stroke-width="6.5" stroke-linecap="round" stroke-linejoin="round"/><path d="M1462 818L1510 846M1480 812L1520 838" fill="none" stroke="#e1e3e7" stroke-width="5" stroke-linecap="round" stroke-linejoin="round"/><path d="M1448 868V882L1525 872L1530 905L1470 915" fill="none" stroke="#e1e3e7" stroke-width="6" stroke-linecap="round" stroke-linejoin="round"/><path d="M1557 836L1580 802H1604M1557 836L1590 858" fill="none" stroke="#e1e3e7" stroke-width="6" stroke-linecap="round" stroke-linejoin="round"/><path d="M1460 762L1520 764L1590 760" fill="none" stroke="#e1e3e7" stroke-width="5.5" stroke-linecap="round" stroke-linejoin="round"/><path d="M1120 990L1130 1015M1150 992L1158 1012M1195 982L1203 1002M1228 1000L1238 1026" fill="none" stroke="#e1e3e7" stroke-width="5" stroke-linecap="round" stroke-linejoin="round"/><path d="M1240 994L1262 1040" fill="none" stroke="#e1e3e7" stroke-width="5" stroke-linecap="round" stroke-linejoin="round"/><path d="M1215 1078L1275 1068M1270 1080L1310 1070" fill="none" stroke="#e1e3e7" stroke-width="5" stroke-linecap="round" stroke-linejoin="round"/><path d="M1640 800L1648 840M1700 802L1708 836M1770 812L1778 850M1860 760L1870 830M1900 770L1910 830M1930 770L1983 790" fill="none" stroke="#e1e3e7" stroke-width="5.5" stroke-linecap="round" stroke-linejoin="round"/><path d="M1870 775L1910 765L1960 772" fill="none" stroke="#e1e3e7" stroke-width="5.5" stroke-linecap="round" stroke-linejoin="round"/><path d="M1100 801L1375 762L1420 754L1560 752L1700 748L1808 750L1847 758L1983 768" fill="none" stroke="#fff" stroke-width="11" stroke-linecap="round" stroke-linejoin="round"/><path d="M1100 789L1375 750" fill="none" stroke="#fff" stroke-width="2" stroke-linecap="round" stroke-linejoin="round"/><path d="M1100 1087L1156 1071.5L1211 1056.5L1400 1014L1700 942L1983 876.5" fill="none" stroke="#fff" stroke-width="11.5" stroke-linecap="round" stroke-linejoin="round"/><path d="M1400 969.5L1700 897.5L1983 832.0" fill="none" stroke="#fff" stroke-width="5" stroke-linecap="round" stroke-linejoin="round"/><path d="M1100 1024L1190 1008L1286 993L1400 969.500" fill="none" stroke="#fff" stroke-width="5" stroke-linecap="round" stroke-linejoin="round"/><path d="M1380 1060.5L1400 1056.0L1700 984.0L1983 918.5" fill="none" stroke="#fff" stroke-width="5" stroke-linecap="round" stroke-linejoin="round"/><path d="M1440 1088.4L1700 1026.0L1983 960.5" fill="none" stroke="#fff" stroke-width="4.5" stroke-linecap="round" stroke-linejoin="round"/><path d="M1620 1081.2L1700 1062.0L1983 996.5" fill="none" stroke="#fff" stroke-width="4.5" stroke-linecap="round" stroke-linejoin="round"/><path d="M1600 874.0L1700 850.0L1983 784.5" fill="none" stroke="#fff" stroke-width="4.5" stroke-linecap="round" stroke-linejoin="round"/><path d="M1610 839.6L1700 818.0L1983 752.5" fill="none" stroke="#fff" stroke-width="4.5" stroke-linecap="round" stroke-linejoin="round"/><path d="M1100 976L1400 918L1520 905" fill="none" stroke="#fff" stroke-width="6" stroke-linecap="round" stroke-linejoin="round"/><path d="M1100 968L1344 918" fill="none" stroke="#fff" stroke-width="3" stroke-linecap="round" stroke-linejoin="round"/><path d="M1100 1028L1170 1016" fill="none" stroke="#fff" stroke-width="4" stroke-linecap="round" stroke-linejoin="round"/><path d="M1457.0 1042.3L1470.9 1100.3" fill="none" stroke="#fff" stroke-width="4.5" stroke-linecap="round" stroke-linejoin="round"/><path d="M1521.0 1027.0L1534.9 1085.0" fill="none" stroke="#fff" stroke-width="4.5" stroke-linecap="round" stroke-linejoin="round"/><path d="M1564.0 930.6L1598.6 1074.6" fill="none" stroke="#fff" stroke-width="4.5" stroke-linecap="round" stroke-linejoin="round"/><path d="M1290.0 994.7L1310.6 1080.7" fill="none" stroke="#fff" stroke-width="4.5" stroke-linecap="round" stroke-linejoin="round"/><path d="M1345.0 1032.4L1358.0 1086.4" fill="none" stroke="#fff" stroke-width="4.5" stroke-linecap="round" stroke-linejoin="round"/><path d="M1230.0 1008.2L1252.6 1102.2" fill="none" stroke="#fff" stroke-width="4.5" stroke-linecap="round" stroke-linejoin="round"/><path d="M1140.0 1025.9L1161.6 1115.9" fill="none" stroke="#fff" stroke-width="4.5" stroke-linecap="round" stroke-linejoin="round"/><path d="M1690.0 820.4L1709.2 900.4" fill="none" stroke="#fff" stroke-width="4.5" stroke-linecap="round" stroke-linejoin="round"/><path d="M1716.0 894.3L1755.4 1058.3" fill="none" stroke="#fff" stroke-width="4.5" stroke-linecap="round" stroke-linejoin="round"/><path d="M1790.0 829.2L1812.1 921.2" fill="none" stroke="#fff" stroke-width="4.5" stroke-linecap="round" stroke-linejoin="round"/><path d="M1836.0 786.5L1894.6 1030.5" fill="none" stroke="#fff" stroke-width="4.5" stroke-linecap="round" stroke-linejoin="round"/><path d="M1916.0 768.0L1977.0 1022.0" fill="none" stroke="#fff" stroke-width="4.5" stroke-linecap="round" stroke-linejoin="round"/><path d="M1960.0 821.8L2005.6 1011.8" fill="none" stroke="#fff" stroke-width="4.5" stroke-linecap="round" stroke-linejoin="round"/><path d="M1760.0 928.1L1780.2 1012.1" fill="none" stroke="#fff" stroke-width="4.5" stroke-linecap="round" stroke-linejoin="round"/><path d="M1709 851L1780 1094" fill="none" stroke="#fff" stroke-width="5" stroke-linecap="round" stroke-linejoin="round"/><path d="M1606 758L1605 851L1617 914L1634 956L1665 1094" fill="none" stroke="#fff" stroke-width="8" stroke-linecap="round" stroke-linejoin="round"/><path d="M1596 770L1597 850L1608 914" fill="none" stroke="#fff" stroke-width="2.5" stroke-linecap="round" stroke-linejoin="round"/><path d="M1172 846L1256 800L1290 786" fill="none" stroke="#fff" stroke-width="5" stroke-linecap="round" stroke-linejoin="round"/><path d="M1100 870L1172 846" fill="none" stroke="#fff" stroke-width="5" stroke-linecap="round" stroke-linejoin="round"/><path d="M1100 905L1150 880L1175 851" fill="none" stroke="#fff" stroke-width="4" stroke-linecap="round" stroke-linejoin="round"/><path d="M1169 812L1174 845" fill="none" stroke="#fff" stroke-width="4" stroke-linecap="round" stroke-linejoin="round"/><path d="M1161 893L1215 868L1260 858L1300 864L1330 884L1345 918" fill="none" stroke="#fff" stroke-width="4" stroke-linecap="round" stroke-linejoin="round"/><path d="M1160 900V960M1160 900L1200 896L1206 952M1180 930L1255 918L1262 942M1230 921L1236 950M1290 880L1300 925M1270 884L1276 925" fill="none" stroke="#fff" stroke-width="3.5" stroke-linecap="round" stroke-linejoin="round"/><path d="M1400 776L1446 790L1480 812L1540 796" fill="none" stroke="#fff" stroke-width="4.5" stroke-linecap="round" stroke-linejoin="round"/><path d="M1462 818L1510 846M1480 812L1520 838" fill="none" stroke="#fff" stroke-width="3" stroke-linecap="round" stroke-linejoin="round"/><path d="M1448 868V882L1525 872L1530 905L1470 915" fill="none" stroke="#fff" stroke-width="4" stroke-linecap="round" stroke-linejoin="round"/><path d="M1557 836L1580 802H1604M1557 836L1590 858" fill="none" stroke="#fff" stroke-width="4" stroke-linecap="round" stroke-linejoin="round"/><path d="M1460 762L1520 764L1590 760" fill="none" stroke="#fff" stroke-width="3.5" stroke-linecap="round" stroke-linejoin="round"/><path d="M1120 990L1130 1015M1150 992L1158 1012M1195 982L1203 1002M1228 1000L1238 1026" fill="none" stroke="#fff" stroke-width="3" stroke-linecap="round" stroke-linejoin="round"/><path d="M1240 994L1262 1040" fill="none" stroke="#fff" stroke-width="3" stroke-linecap="round" stroke-linejoin="round"/><path d="M1215 1078L1275 1068M1270 1080L1310 1070" fill="none" stroke="#fff" stroke-width="3" stroke-linecap="round" stroke-linejoin="round"/><path d="M1640 800L1648 840M1700 802L1708 836M1770 812L1778 850M1860 760L1870 830M1900 770L1910 830M1930 770L1983 790" fill="none" stroke="#fff" stroke-width="3.5" stroke-linecap="round" stroke-linejoin="round"/><path d="M1870 775L1910 765L1960 772" fill="none" stroke="#fff" stroke-width="3.5" stroke-linecap="round" stroke-linejoin="round"/><path d="M1923.500 891L1983 880V937L1933 938z" fill="#c4e6cd"/><path d="M1807 917L1848 908L1861 988L1821 997z" fill="#c4e6cd"/><path d="M1113 793C1150 786 1300 762 1365 750L1372 755M1100 814C1120 818 1135 812 1148 800L1153 803M1175 856L1230 820L1270 798L1290 786M1197 850L1225 846H1265L1290 838L1330 842M1212 847L1213 866M1290 838L1318 862M1305 840L1296 864M1255 789C1300 795 1340 780 1387 777M1262 808C1268 830 1290 838 1300 840M1340 820L1330 850L1325 880M1330 880L1352 912M1328 896L1334 906L1328 914" fill="none" stroke="#34a853" stroke-width="1.200"/><path d="M1330 850C1335 832 1350 826 1372 826M1385 830L1400 850M1352 800C1356 810 1358 818 1356 824M1410 820C1425 838 1440 838 1445 856L1425 866L1402 852" fill="none" stroke="#34a853" stroke-width="1.200" stroke-dasharray="5 3"/><path d="M1487 810L1505 822L1557 838M1528 876L1592 860M1533 876L1545 904M1565 869L1570 900C1568 910 1560 918 1548 920L1555 924L1565 965M1570 884L1585 880L1592 912L1576 916z" fill="none" stroke="#34a853" stroke-width="1.200"/><path d="M1555 924L1562 958L1545 968M1548 938L1560 936M1568 958L1626 944M1568 950L1620 938M1580 945L1582 956M1598 942L1600 952M1612 940L1615 948" fill="none" stroke="#34a853" stroke-width="1.200"/><path d="M1625 775C1660 785 1690 775 1760 776M1700 770L1764 772M1628 800C1660 792 1680 808 1700 790C1720 778 1740 790 1790 784M1636 798L1640 812M1626 808L1638 802" fill="none" stroke="#34a853" stroke-width="1.200" stroke-dasharray="5 3"/><path d="M1760 776L1800 772C1830 768 1850 780 1855 804M1768 786L1778 812" fill="none" stroke="#34a853" stroke-width="1.200"/><path d="M1826 914L1845 992M1810 955L1856 945M1831 948a7 9 0 1 0 .1 0M1838 966L1832 980L1842 990L1845 975z" fill="none" stroke="#34a853" stroke-width="1.200"/><path d="M1748 988L1792 980M1786 962L1798 1006M1752 1000L1758 1012" fill="none" stroke="#34a853" stroke-width="1.200"/><path d="M1926 893L1945 899L1958 890L1983 888M1941 898L1942 937M1945 937L1965 905L1983 896M1958 890L1962 905L1983 916M1955 920L1960 932M1941 905a4.500 4.500 0 1 0 .1 0" fill="none" stroke="#34a853" stroke-width="1.200"/><path d="M1133 1022C1126 1038 1128 1055 1138 1070" fill="none" stroke="#34a853" stroke-width="1.200"/>
<text x="1693.8" y="487" font-size="18.5" fill="#5f6368" font-weight="normal" text-anchor="start" textLength="178.7" lengthAdjust="spacing" stroke="#fff" stroke-width="3" stroke-linejoin="round" paint-order="stroke">Riddarholmskyrkan</text><text x="1759.1" y="504.1" font-size="15.5" fill="#5f6368" font-weight="normal" text-anchor="start" textLength="113.4" lengthAdjust="spacing" stroke="#fff" stroke-width="3" stroke-linejoin="round" paint-order="stroke">Tillfälligt stängt</text><g transform="translate(1891.500 488)"><path d="M0 20C-2.500 13-15 10-15-1.500a15 15 0 0 1 30 0C15 10 2.500 13 0 20z" fill="#9aa0a6" stroke="#fff" stroke-width="1"/><path d="M0-10V8M-5.500-4.500h11" stroke="#fff" stroke-width="2.400"/></g><g transform="translate(1824 546)"><rect width="18" height="18" rx="3" fill="#1a73e8"/><path d="M5.500 8.500V6.500h1.500V5h4v1.500h1.500v2l1.500 .7-1.200 3.300H5.200L4 9.200z" fill="#fff"/><path d="M4.500 14.200h9" stroke="#fff" stroke-width="1.400"/><path d="M6.500 9.500h5" stroke="#1a73e8" stroke-width="1"/></g><g transform="translate(1401 733)"><rect width="18" height="18" rx="3" fill="#1a73e8"/><path d="M5.500 8.500V6.500h1.500V5h4v1.500h1.500v2l1.500 .7-1.200 3.300H5.200L4 9.200z" fill="#fff"/><path d="M4.500 14.200h9" stroke="#fff" stroke-width="1.400"/><path d="M6.500 9.500h5" stroke="#1a73e8" stroke-width="1"/></g><text x="1882.7" y="627.7" font-size="19.5" fill="#1a73e8" font-weight="normal" text-anchor="start" textLength="98.7" lengthAdjust="spacing" stroke="#fff" stroke-width="3" stroke-linejoin="round" paint-order="stroke">Gamla stan</text><text x="1701.2" y="759.2" font-size="19.8" fill="#12858f" font-weight="normal" text-anchor="start" textLength="112" lengthAdjust="spacing" stroke="#fff" stroke-width="3" stroke-linejoin="round" paint-order="stroke">Mariaberget</text><g transform="translate(1831.6 747)"><path d="M0 26C-3 17-15.500 12-15.500 0a15.500 15.500 0 0 1 31 0C15.500 12 3 17 0 26z" fill="#12b5cb" stroke="#fff" stroke-width="1"/><path d="M-8.500-5h4l1.500-2.200h6l1.500 2.200h4v11h-17z" fill="#fff"/><circle cx="0" cy=".5" r="3.300" fill="#12b5cb"/><path d="M-10-8.500h4.500M-7.800-10.800v4.500" stroke="#fff" stroke-width="1.300"/></g><text x="1196.8" y="792.2" font-size="18" fill="#3c4043" font-weight="normal" text-anchor="start" textLength="149.7" lengthAdjust="spacing" transform="rotate(-7.8 1196.8 792.2)" stroke="#fff" stroke-width="3" stroke-linejoin="round" paint-order="stroke">Söder Mälarstrand</text><path d="M1372 759l-9 3.500M1363 762.500l5.500-.5M1363 762.500l3-3.500" stroke="#9aa0a6" stroke-width="1.600" fill="none"/><text x="1224.9" y="821.5" font-size="19.8" fill="#12858f" font-weight="normal" text-anchor="start" textLength="165.5" lengthAdjust="spacing" stroke="#fff" stroke-width="3" stroke-linejoin="round" paint-order="stroke">Skinnarviksberget</text><g transform="translate(1409.7 811)"><path d="M0 26C-3 17-15.500 12-15.500 0a15.500 15.500 0 0 1 31 0C15.500 12 3 17 0 26z" fill="#12b5cb" stroke="#fff" stroke-width="1"/><path d="M-8.500-5h4l1.500-2.200h6l1.500 2.200h4v11h-17z" fill="#fff"/><circle cx="0" cy=".5" r="3.300" fill="#12b5cb"/><path d="M-10-8.500h4.500M-7.800-10.800v4.500" stroke="#fff" stroke-width="1.300"/></g><text x="1241.4" y="877" font-size="19.8" fill="#188038" font-weight="normal" text-anchor="start" textLength="169.9" lengthAdjust="spacing" stroke="#fff" stroke-width="3" stroke-linejoin="round" paint-order="stroke">Skinnarviksparken</text><text x="1100" y="836" font-size="19.5" fill="#188038" font-weight="normal" text-anchor="start" stroke="#fff" stroke-width="3" stroke-linejoin="round" paint-order="stroke">en</text><text x="1098" y="864" font-size="14.5" fill="#5f6368" font-weight="normal" text-anchor="start" transform="rotate(-9 1098 864)" stroke="#fff" stroke-width="3" stroke-linejoin="round" paint-order="stroke">sgatan</text><text x="1098" y="992" font-size="18" fill="#3c4043" font-weight="normal" text-anchor="start" stroke="#fff" stroke-width="3" stroke-linejoin="round" paint-order="stroke">an</text><text x="1159.9" y="971.7" font-size="15" fill="#5f6368" font-weight="normal" text-anchor="start" textLength="78" lengthAdjust="spacing" transform="rotate(-13.4 1159.9 971.7)" stroke="#fff" stroke-width="3" stroke-linejoin="round" paint-order="stroke">Lundagatan</text><text x="1409" y="969.6" font-size="15" fill="#5f6368" font-weight="normal" text-anchor="start" textLength="113.5" lengthAdjust="spacing" transform="rotate(-14.2 1409 969.6)" stroke="#fff" stroke-width="3" stroke-linejoin="round" paint-order="stroke">Brännkyrkagatan</text><text x="1635.8" y="916.2" font-size="15" fill="#5f6368" font-weight="normal" text-anchor="start" textLength="114.7" lengthAdjust="spacing" transform="rotate(-13.2 1635.8 916.2)" stroke="#fff" stroke-width="3" stroke-linejoin="round" paint-order="stroke">Brännkyrkagatan</text><text x="1416.7" y="1013.5" font-size="18.5" fill="#3c4043" font-weight="normal" text-anchor="start" textLength="93.2" lengthAdjust="spacing" transform="rotate(-13.8 1416.7 1013.5)" stroke="#fff" stroke-width="3" stroke-linejoin="round" paint-order="stroke">Hornsgatan</text><text x="1675.8" y="950.6" font-size="18.5" fill="#3c4043" font-weight="normal" text-anchor="start" textLength="95" lengthAdjust="spacing" transform="rotate(-13.4 1675.8 950.6)" stroke="#fff" stroke-width="3" stroke-linejoin="round" paint-order="stroke">Hornsgatan</text><text x="1619.3" y="838.9" font-size="15" fill="#5f6368" font-weight="normal" text-anchor="start" textLength="76" lengthAdjust="spacing" transform="rotate(-4.1 1619.3 838.9)" stroke="#fff" stroke-width="3" stroke-linejoin="round" paint-order="stroke">Bastugatan</text><text x="1733.7" y="829.3" font-size="15" fill="#5f6368" font-weight="normal" text-anchor="start" textLength="76.7" lengthAdjust="spacing" transform="rotate(-8.2 1733.7 829.3)" stroke="#fff" stroke-width="3" stroke-linejoin="round" paint-order="stroke">Bastugatan</text><text x="1744.8" y="859.6" font-size="15" fill="#5f6368" font-weight="normal" text-anchor="start" textLength="82.7" lengthAdjust="spacing" transform="rotate(-10.5 1744.8 859.6)" stroke="#fff" stroke-width="3" stroke-linejoin="round" paint-order="stroke">Tavastgatan</text><text x="1857.8" y="839.8" font-size="19.8" fill="#12858f" font-weight="normal" text-anchor="start" textLength="51" lengthAdjust="spacing" stroke="#fff" stroke-width="3" stroke-linejoin="round" paint-order="stroke">Stads</text><text x="1966" y="839.8" font-size="19.8" fill="#12858f" font-weight="normal" text-anchor="start" stroke="#fff" stroke-width="3" stroke-linejoin="round" paint-order="stroke">et</text><text x="1970" y="866" font-size="16" fill="#3c4043" font-weight="normal" text-anchor="start" transform="rotate(-14 1970 866)" stroke="#fff" stroke-width="3" stroke-linejoin="round" paint-order="stroke">ns</text><text x="1783.9" y="907.3" font-size="18.5" fill="#3c4043" font-weight="normal" text-anchor="start" textLength="120.3" lengthAdjust="spacing" stroke="#fff" stroke-width="3" stroke-linejoin="round" paint-order="stroke">ROSENDAL</text><text x="1254.6" y="990.5" font-size="19.8" fill="#1a73e8" font-weight="normal" text-anchor="start" textLength="123.3" lengthAdjust="spacing" stroke="#fff" stroke-width="3" stroke-linejoin="round" paint-order="stroke">Zinkensdamm</text><g transform="translate(1389.7 983.6)"><circle r="8" fill="#fff" stroke="#1a73e8" stroke-width="1.600"/><path d="M-4-3.500h8M0-3.500V4.500" stroke="#1a73e8" stroke-width="2.200" fill="none"/></g><text x="1543.5" y="1020.5" font-size="19.8" fill="#1a73e8" font-weight="normal" text-anchor="start" textLength="99.5" lengthAdjust="spacing" stroke="#fff" stroke-width="3" stroke-linejoin="round" paint-order="stroke">Mariatorget</text><g transform="translate(1654.9 1014.2)"><circle r="8" fill="#fff" stroke="#1a73e8" stroke-width="1.600"/><path d="M-4-3.500h8M0-3.500V4.500" stroke="#1a73e8" stroke-width="2.200" fill="none"/></g><text x="1218.4" y="1061.6" font-size="20.5" fill="#188038" font-weight="normal" text-anchor="start" textLength="166.4" lengthAdjust="spacing" stroke="#fff" stroke-width="3" stroke-linejoin="round" paint-order="stroke">Zinkensdamms IP</text><g transform="translate(1405.400 1047.500)"><path d="M0 26C-3 17-15.500 12-15.500 0a15.500 15.500 0 0 1 31 0C15.500 12 3 17 0 26z" fill="#34a853" stroke="#fff" stroke-width="1"/><circle cy="0" r="5.600" fill="#fff"/></g><text x="1768.2" y="1021" font-size="15" fill="#5f6368" font-weight="normal" text-anchor="start" textLength="116.9" lengthAdjust="spacing" transform="rotate(-13 1768.2 1021)" stroke="#fff" stroke-width="3" stroke-linejoin="round" paint-order="stroke">Sankt Paulsgatan</text><text x="1754" y="1035" font-size="15" fill="#3c4043" font-weight="normal" text-anchor="start" transform="rotate(78 1754 1035)" stroke="#fff" stroke-width="3" stroke-linejoin="round" paint-order="stroke">Timme</text><text x="1100" y="1098" font-size="17" fill="#3c4043" font-weight="normal" text-anchor="start" transform="rotate(-13 1100 1098)" stroke="#fff" stroke-width="3" stroke-linejoin="round" paint-order="stroke">orn</text><text x="1146" y="1086" font-size="17" fill="#3c4043" font-weight="normal" text-anchor="start" transform="rotate(-13 1146 1086)" stroke="#fff" stroke-width="3" stroke-linejoin="round" paint-order="stroke">gatan</text><g transform="translate(1541 783)"><circle r="21" fill="#339933" stroke="#fff" stroke-width="2"/><circle cx="0" cy="-11.500" r="2.600" fill="#fff"/><path d="M-5.500 0v-5a3 3 0 0 1 3-3h5a3 3 0 0 1 3 3v5z" fill="#fff"/><path d="M-15-3h30l-1.500 3v11h-27V0z" fill="#fff"/><path d="M-14.500 0h29" stroke="#339933" stroke-width=".8"/></g>
</svg>
<div id="mapc">
<div style="position:absolute;left:15.0px;top:16.0px;width:116.0px;height:60.0px;background:#fff;border-radius:3px 0 0 3px;box-shadow:0 1px 4px -1px rgba(0,0,0,.3);"></div>
<div style="position:absolute;left:131.0px;top:16.0px;width:134.0px;height:60.0px;background:#fff;border-radius:0 3px 3px 0;border-left:1px solid #e6e6e6;box-shadow:0 1px 4px -1px rgba(0,0,0,.3);"></div>
<div style="position:absolute;line-height:1;white-space:nowrap;left:41.5px;top:32.7px;font-size:26px;color:#000;letter-spacing:0.411px;-webkit-text-stroke:.7px #000;">Karta</div>
<div style="position:absolute;line-height:1;white-space:nowrap;left:157.9px;top:32.7px;font-size:26px;color:#565656;letter-spacing:0.436px;">Satellit</div>
<div style="position:absolute;left:808.0px;top:359.0px;width:60.0px;height:60.0px;background:#fff;border-radius:3px;box-shadow:0 1px 4px -1px rgba(0,0,0,.3);"></div>
<svg style="position:absolute;left:825.0px;top:366.0px;overflow:visible;" width="26" height="46" viewBox="0 0 26 46"><circle cx="13" cy="8.500" r="7.600" fill="#fbbc04" stroke="#e8a200" stroke-width=".8"/><path d="M5 17.500h16l3.200 14-2.600 1-2-8.500V45.500h-5V33h-3.200V45.500h-5V24l-2 8.500-2.600-1z" fill="#fbbc04" stroke="#e8a200" stroke-width=".8"/><path d="M8 17.500h10L13 24z" fill="#e37400"/></svg>
<div style="position:absolute;left:808.0px;top:467.0px;width:60.0px;height:121.0px;background:#fff;border-radius:3px;box-shadow:0 1px 4px -1px rgba(0,0,0,.3);"></div>
<div style="position:absolute;left:815.0px;top:527.0px;width:46.0px;height:1.0px;background:#e6e6e6"></div>
<svg style="position:absolute;left:824.5px;top:483.5px;overflow:visible;" width="27" height="27" viewBox="0 0 27 27"><path d="M13.500 0v27M0 13.500h27" stroke="#666" stroke-width="4.500"/></svg>
<svg style="position:absolute;left:824.5px;top:556.0px;overflow:visible;" width="27" height="5" viewBox="0 0 27 5"><path d="M0 2.500h27" stroke="#666" stroke-width="4.500"/></svg>
<div style="position:absolute;left:228.0px;top:603.0px;width:655.0px;height:21.0px;background:rgba(255,255,255,.72);"></div>
<div style="position:absolute;line-height:1;white-space:nowrap;left:234.5px;top:606.6px;font-size:14.7px;color:#222;letter-spacing:0.370px;">Kortkommandon</div>
<div style="position:absolute;line-height:1;white-space:nowrap;left:364.9px;top:606.6px;font-size:14.7px;color:#222;letter-spacing:0.153px;">Kartdata ©2024 Google</div>
<div style="position:absolute;line-height:1;white-space:nowrap;left:540.8px;top:606.6px;font-size:14.7px;color:#222;letter-spacing:0.168px;">100 m</div>
<div style="position:absolute;line-height:1;white-space:nowrap;left:672.2px;top:606.6px;font-size:14.7px;color:#222;letter-spacing:0.294px;">Villkor</div>
<div style="position:absolute;line-height:1;white-space:nowrap;left:732.0px;top:606.6px;font-size:14.7px;color:#222;letter-spacing:0.178px;">Rapportera ett kartfel</div>
<svg style="position:absolute;left:589.0px;top:607.0px;overflow:visible;" width="64" height="11" viewBox="0 0 64 11"><path d="M1.500 0v9.500h61V0" fill="none" stroke="#555" stroke-width="3"/></svg>
<svg style="position:absolute;left:14.0px;top:582.0px;overflow:visible;" width="90" height="36" viewBox="0 0 90 36"><text x="2" y="28.500" font-size="27" font-family="Liberation Sans,sans-serif" textLength="82" lengthAdjust="spacing" stroke="#fff" stroke-width="2.500" paint-order="stroke" stroke-linejoin="round"><tspan fill="#4285f4">G</tspan><tspan fill="#ea4335">o</tspan><tspan fill="#fbbc05">o</tspan><tspan fill="#4285f4">g</tspan><tspan fill="#34a853">l</tspan><tspan fill="#ea4335">e</tspan></text></svg>
</div>
</div>
</div>
</body>
</html>
